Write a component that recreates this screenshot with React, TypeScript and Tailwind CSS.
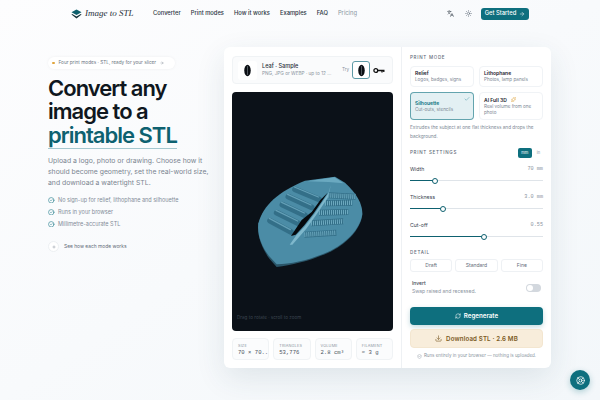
import { ArrowRight, Check, CircleCheck, Download, Languages, LifeBuoy, Plus, RefreshCw, ShieldCheck, Sparkles, Sun } from "lucide-react";

const NAV = ["Converter", "Print modes", "How it works", "Examples", "FAQ"];
const BULLETS = ["No sign-up for relief, lithophane and silhouette", "Runs in your browser", "Millimetre-accurate STL"];
const STATS = [
  { label: "SIZE", value: "70 × 70.." },
  { label: "TRIANGLES", value: "53,776" },
  { label: "VOLUME", value: "2.8 cm³" },
  { label: "FILAMENT", value: "≈ 3 g" },
];
const SLIDERS = [
  { label: "Width", value: "70 mm", pct: 19 },
  { label: "Thickness", value: "3.0 mm", pct: 25 },
  { label: "Cut-off", value: "0.55", pct: 56 },
];

function LeafMark({ size }: { size: number }) {
  return (
    <svg width={size} height={size} viewBox="0 0 16 16">
      <ellipse cx="8" cy="8" rx="4" ry="7" fill="#0b0f14" />
      <path d="M8 2.5 L8 13.5" stroke="#9aa3ab" strokeWidth="0.6" />
    </svg>
  );
}

function Logo() {
  return (
    <svg width="11" height="10" viewBox="0 0 11 10">
      <path d="M5.5 0.5 L10.5 3.3 L5.5 6.1 L0.5 3.3 Z" fill="#0e5f6c" />
      <path d="M1.2 5 L5.5 7.4 L9.8 5 L10.6 5.6 L5.5 9.5 L0.4 5.6 Z" fill="#16333a" />
    </svg>
  );
}

function Leaf3D() {
  const left = [
    "M150 58 L222 88",
    "M130 80 L200 112",
    "M112 104 L180 136",
    "M95 128 L160 160",
    "M75 152 L138 186",
  ];
  const right = [
    "M250 76 L332 80",
    "M240 100 L322 98",
    "M222 128 L310 126",
    "M198 160 L295 154",
    "M178 194 L274 188",
  ];
  return (
    <svg width="140" height="130" viewBox="0 0 420 390">
      <path d="M40 160 C55 105 100 65 180 32 L270 20 L300 38 C335 70 352 100 352 132 C345 180 300 222 250 245 C195 270 140 282 95 288 L72 262 C50 230 36 195 40 160 Z" fill="#2a5568" transform="translate(0 3)" />
      <path d="M40 160 C55 105 100 65 180 32 L270 20 L300 38 C335 70 352 100 352 132 C345 180 300 222 250 245 C195 270 140 282 95 283 L72 258 C50 230 36 195 40 160 Z" fill="#4b8ca6" />
      <path d="M186 34 L268 22 L296 40 L250 36 Z" fill="#6aa9c0" />
      {left.map((d) => (
        <g key={d}>
          <path d={d} stroke="#336f88" strokeWidth="17" strokeLinecap="round" />
          <path d={d} stroke="#639fb6" strokeWidth="4" strokeLinecap="round" transform="translate(-2 -7)" />
        </g>
      ))}
      {right.map((d) => (
        <g key={d}>
          <path d={d} stroke="#336f88" strokeWidth="18" />
          <path d={d} stroke="#6da9bf" strokeWidth="14" strokeDasharray="3 3" />
        </g>
      ))}
      <path d="M248 68 L226 90 L200 126 L170 150 L138 198 L152 194 L178 166 L206 130 Z" fill="#05090d" />
      <path d="M258 44 L250 70 L208 132 L180 168 L154 196 L134 224 L142 224 L184 176 L214 134 L248 84 Z" fill="#7fb8cc" />
    </svg>
  );
}

function ModeCard({ title, sub, active, ai, h }: { title: string; sub: string; active?: boolean; ai?: boolean; h: string }) {
  return (
    <div className={`relative flex flex-col justify-center rounded-[4px] border px-[4px] ${h} ${active ? "border-[#0e7280]/60 bg-[#e3f0f3]" : "border-[#f0f3f6] bg-white"}`}>
      <div className={active ? "flex items-center gap-1 text-[5px] leading-[6.5px] font-semibold text-[#0e7280]" : "flex items-center gap-1 text-[5px] leading-[6.5px] font-semibold text-[#1c2530]"}>
        {title}
        {ai && <Sparkles size={5} className="text-[#e0a53c]" />}
      </div>
      <div className="mt-[0.5px] text-[4.6px] leading-[6px] text-[#7c8794]">{sub}</div>
      {active && <Check size={6} className="absolute right-[3px] top-[3px] text-[#4d9aa8]" />}
    </div>
  );
}

function SectionLabel({ children }: { children: string }) {
  return <div className="text-[4.5px] leading-[6px] font-medium tracking-[0.16em] text-[#5f6b78]">{children}</div>;
}

function Slider({ label, value, pct }: { label: string; value: string; pct: number }) {
  return (
    <div className="h-[28px]">
      <div className="flex justify-between text-[5.2px] leading-[7px]">
        <span className="text-[#3a4450]">{label}</span>
        <span className="font-['Liberation_Mono',monospace] text-[#8a94a0]">{value}</span>
      </div>
      <div className="relative mt-[7px] h-[1px] bg-[#dfe4e9]">
        <div className="h-[1px] bg-[#0e6170]" style={{ width: `${pct}%` }} />
        <div className="absolute top-[-2.5px] size-[6px] rounded-full border border-[#0e6170] bg-white" style={{ left: `calc(${pct}% - 3px)` }} />
      </div>
    </div>
  );
}

export default function App() {
  return (
    <div className="relative h-[400px] w-[600px] overflow-hidden bg-gradient-to-br from-[#fdfdfe] to-[#f3f7fa] font-['Inter',sans-serif] text-[#0f1720]">
      <header className="mb-[20px] flex h-[27px] items-center pl-[71px] pr-[71px]">
        <Logo />
        <span className="ml-[3px] w-[62px] font-['Liberation_Serif',serif] text-[9px] italic text-[#28313b]">Image to STL</span>
        <nav className="ml-[6px] flex gap-[10px] text-[5.8px] font-medium text-[#2a333d]">
          {NAV.map((n) => (
            <span key={n}>{n}</span>
          ))}
          <span className="font-normal text-[#8b95a1]">Pricing</span>
        </nav>
        <Languages size={7} className="ml-auto text-[#3f4a55]" />
        <Sun size={7} className="ml-[11px] text-[#5f6b78]" />
        <button className="ml-[9px] flex h-[12px] w-[48px] items-center justify-center gap-[3px] rounded-[3px] bg-[#0e6f7e] text-[5.8px] font-medium text-white">
          Get Started
          <ArrowRight size={6} />
        </button>
      </header>

      <main className="flex pl-[48px]">
        <section className="w-[176px] pt-[10px]">
          <div className="flex h-[12px] w-[127px] items-center gap-[3px] rounded-full bg-white pl-[3px] text-[4.7px] whitespace-nowrap text-[#6b7682] shadow-[0_0_3px_rgba(15,23,32,0.06)]">
            <span className="ml-[1px] size-[2.5px] rounded-full bg-[#e0a53c]" />
            <span className="ml-[1px]">Four print modes · STL, ready for your slicer</span>
            <ArrowRight size={4} className="ml-[1px]" />
          </div>
          <h1 className="mt-[8px] text-[22px] leading-[23.4px] font-semibold tracking-[-0.045em]">
            Convert any
            <br />
            image to a
            <br />
            <span className="border-b border-[#a5c8cf] text-[#0e6170]">printable STL</span>
          </h1>
          <p className="mt-[8px] w-[166px] text-[6.85px] leading-[11px] text-[#7a8591]">
            Upload a logo, photo or drawing. Choose how it should become geometry, set the real-world size, and download a watertight STL.
          </p>
          <ul className="mt-[9px] flex flex-col gap-[6px] text-[5.5px] text-[#828c98]">
            {BULLETS.map((b) => (
              <li key={b} className="flex h-[6px] items-center gap-[3.5px]">
                <CircleCheck size={6.5} className="text-[#0e7280]" />
                {b}
              </li>
            ))}
          </ul>
          <div className="mt-[14px] flex items-center gap-[5px] text-[4.9px] text-[#5f6b78]">
            <span className="flex size-[11px] items-center justify-center rounded-full border border-[#edf0f3] bg-white">
              <Plus size={4} />
            </span>
            See how each mode works
          </div>
        </section>

        <section className="flex h-[321px] w-[327px] rounded-[6px] bg-white shadow-[0_10px_30px_rgba(40,70,95,0.11)]">
          <div className="w-[178px] border-r border-[#eef1f4] px-[8px] pt-[9px]">
            <div className="flex h-[28px] items-center rounded-[4px] border border-[#f0f3f5] bg-[#fafbfc] pl-[5px]">
              <span className="flex size-[19px] items-center justify-center rounded-[3px] bg-white">
                <LeafMark size={13} />
              </span>
              <div className="ml-[5px] w-[73px]">
                <div className="text-[5.6px] leading-[7px] font-medium text-[#28313b]">Leaf · Sample</div>
                <div className="text-[4.7px] leading-[7px] whitespace-nowrap text-[#8a94a0]">PNG, JPG or WEBP · up to 12 ...</div>
              </div>
              <span className="ml-[7px] text-[4.7px] text-[#8a94a0]">Try</span>
              <span className="ml-[3px] flex size-[18px] items-center justify-center rounded-[3px] border border-[#5d9aa6] bg-white">
                <LeafMark size={13} />
              </span>
              <svg width="12" height="7" viewBox="0 0 12 7" className="ml-[3px]">
                <circle cx="2.8" cy="3.5" r="1.9" fill="none" stroke="#111" strokeWidth="1.3" />
                <path d="M4.5 3.5 H11.5 M9 3.5 V5.5 M10.8 3.5 V5" stroke="#111" strokeWidth="1.3" />
              </svg>
            </div>
            <div className="relative mt-[8px] h-[239px] rounded-[4px] bg-[#0b1118] pl-[13px] pt-[78px]">
              <Leaf3D />
              <span className="absolute bottom-[9px] left-[5px] text-[4.6px] text-[#3c4650]">Drag to rotate · scroll to zoom</span>
            </div>
            <div className="mt-[7px] grid grid-cols-4 gap-[4px]">
              {STATS.map((s) => (
                <div key={s.label} className="h-[22px] rounded-[4px] border border-[#f0f3f5] bg-[#fbfcfd] pl-[5px] pt-[4px]">
                  <div className="text-[3.8px] leading-[6px] tracking-[0.05em] text-[#8a94a0]">{s.label}</div>
                  <div className="font-['Liberation_Mono',monospace] text-[5.6px] leading-[8px] whitespace-nowrap text-[#4a5460]">{s.value}</div>
                </div>
              ))}
            </div>
          </div>

          <div className="w-[149px] px-[8px] pt-[8px]">
            <SectionLabel>PRINT MODE</SectionLabel>
            <div className="mt-[5px] grid grid-cols-2 gap-x-[5px] gap-y-[5px]">
              <ModeCard h="h-[21px]" title="Relief" sub="Logos, badges, signs" />
              <ModeCard h="h-[21px]" title="Lithophane" sub="Photos, lamp panels" />
              <ModeCard h="h-[28px]" title="Silhouette" sub="Cut-outs, stencils" active />
              <ModeCard h="h-[28px]" title="AI Full 3D" sub="Real volume from one photo" ai />
            </div>
            <p className="mt-[3px] text-[4.7px] leading-[8.5px] text-[#7c8794]">
              Extrudes the subject at one flat thickness and drops the background.
            </p>
            <div className="mt-[8px] flex h-[10px] items-center justify-between">
              <SectionLabel>PRINT SETTINGS</SectionLabel>
              <div className="flex items-center gap-[2px] text-[4px] text-[#8a94a0]">
                <span className="flex h-[10px] w-[14px] items-center justify-center rounded-[2px] bg-[#0e6f7e] text-white">mm</span>
                <span className="px-[3px]">in</span>
              </div>
            </div>
            <div className="mt-[8px]">
              {SLIDERS.map((s) => (
                <Slider key={s.label} {...s} />
              ))}
            </div>
            <SectionLabel>DETAIL</SectionLabel>
            <div className="mt-[3px] grid grid-cols-3 gap-[3px]">
              {["Draft", "Standard", "Fine"].map((d) => (
                <div key={d} className="flex h-[13px] items-center justify-center rounded-[3px] border border-[#eef1f4] text-[5px] text-[#5f6b78]">
                  {d}
                </div>
              ))}
            </div>
            <div className="mt-[8px] flex items-center justify-between pl-[2px] pr-[2px]">
              <div>
                <div className="text-[5px] leading-[7px] font-medium text-[#3a4450]">Invert</div>
                <div className="mt-[1px] text-[5px] leading-[7px] text-[#8a94a0]">Swap raised and recessed.</div>
              </div>
              <span className="relative h-[8px] w-[15px] rounded-full bg-[#d3d8de]">
                <span className="absolute left-[1px] top-[1px] size-[6px] rounded-full bg-white" />
              </span>
            </div>
            <button className="mt-[12px] flex h-[18px] w-full items-center justify-center gap-[3px] rounded-[4px] bg-[#0e6f7e] text-[6.2px] font-semibold text-white shadow-[0_2px_5px_rgba(14,111,126,0.25)]">
              <RefreshCw size={6} />
              Regenerate
            </button>
            <button className="mt-[4px] flex h-[19px] w-full items-center justify-center gap-[4px] rounded-[4px] border border-[#f3e6d0] bg-[#f8eddb] text-[6.2px] font-semibold tracking-[0.02em] text-[#7a5a24]">
              <Download size={7} />
              Download STL · 2.6 MB
            </button>
            <div className="mt-[5px] flex items-center justify-center gap-[2px] text-[4.5px] whitespace-nowrap text-[#8a94a0]">
              <ShieldCheck size={5} />
              Runs entirely in your browser — nothing is uploaded.
            </div>
          </div>
        </section>
      </main>

      <button className="absolute left-[570px] top-[370px] flex size-[20px] items-center justify-center rounded-full bg-[#0e6f7e] text-white shadow-[0_2px_6px_rgba(14,111,126,0.3)]">
        <LifeBuoy size={9} />
      </button>
    </div>
  );
}
